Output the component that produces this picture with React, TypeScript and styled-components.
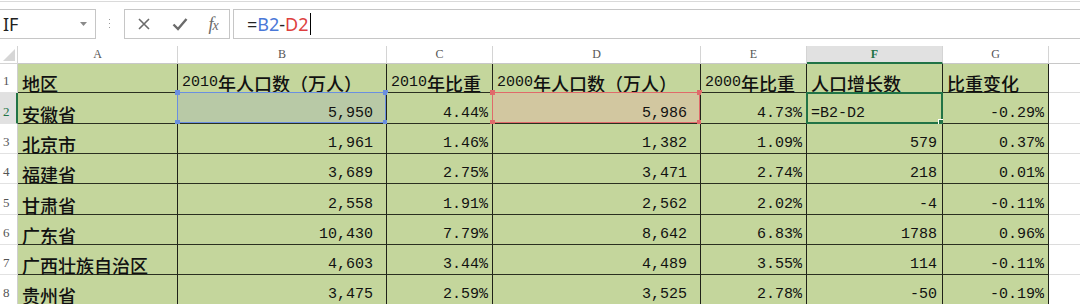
import * as React from 'react'
import styled, { createGlobalStyle, css } from 'styled-components'

const GlobalStyle = createGlobalStyle`
  html, body {
    margin: 0;
    padding: 0;
    background: #ffffff;
  }
  body {
    width: 1080px;
    height: 304px;
    overflow: hidden;
    font-family: "Noto Sans CJK SC", "Noto Sans", sans-serif;
  }
`

const colors = {
  green: '#c4d69c',
  greenBlue: '#b8c9a6',
  greenRed: '#d2c7a0',
  grid: '#1f2219',
  header: '#ffffff',
  headerLine: '#d4d4d4',
  headerActive: '#e1e1e1',
  excel: '#217346',
  blue: '#6a8fe0',
  red: '#e06a6a',
  ink: '#111111',
}

// ---------- formula bar ----------

const TopBar = styled.div`
  display: flex;
  margin-top: 1px;
  border-top: 1px solid #dadada;
  padding: 7px 0;
  height: 30px;
`

const NameBox = styled.div`
  width: 97px;
  margin-left: -1px;
  box-sizing: border-box;
  border: 1px solid #c6c6c6;
  display: flex;
  align-items: center;
  justify-content: space-between;
  padding: 0 8px 0 3px;
  font-family: "Noto Sans", sans-serif;
  font-size: 18px;
  color: #222;
`

const Grip = styled.div`
  width: 28px;
  display: flex;
  align-items: center;
  justify-content: center;
`

const FxBox = styled.div`
  width: 106px;
  box-sizing: border-box;
  border: 1px solid #c6c6c6;
  display: grid;
  grid-template-columns: 38px 34px 1fr;
  align-items: center;
  justify-items: center;
`

const Fx = styled.span`
  font-family: "Liberation Serif", serif;
  font-style: italic;
  font-size: 18px;
  color: #6a6a6a;
  letter-spacing: -1px;

  small {
    font-size: 14px;
  }
`

const FormulaInput = styled.div`
  flex: 1;
  margin-left: 3px;
  box-sizing: border-box;
  border: 1px solid #c6c6c6;
  border-right: none;
  display: flex;
  align-items: center;
  padding-left: 13px;
  font-family: "Noto Sans", sans-serif;
  font-size: 18px;
  color: #222;
`

const Ref = styled.span<{ $c: string }>`
  color: ${(p) => p.$c};
`

const Caret = styled.span`
  display: inline-block;
  width: 1px;
  height: 22px;
  background: #000;
  margin-left: 1px;
`

// ---------- sheet ----------

const Sheet = styled.div`
  display: grid;
  grid-template-columns: 18px 160px 209px 106px 208px 106px 136px 106px 106px;
  grid-template-rows: 18px 29px 31px 30px 30px 31px 30px 30px 30px;
`

const Corner = styled.div`
  background: ${colors.header};
  border-right: 1px solid ${colors.headerLine};
  border-bottom: 1px solid ${colors.headerLine};
  display: flex;
  align-items: flex-end;
  justify-content: flex-end;
  padding: 0 2px 2px 0;
`

const ColHead = styled.div<{ $active?: boolean }>`
  box-sizing: border-box;
  background: ${colors.header};
  border-right: 1px solid ${colors.headerLine};
  border-bottom: 1px solid #c8c8c8;
  display: flex;
  align-items: center;
  justify-content: center;
  font-family: "Liberation Serif", serif;
  font-size: 12px;
  color: #555;

  ${(p) =>
    p.$active &&
    css`
      background: ${colors.headerActive};
      border-bottom: 2px solid ${colors.excel};
      color: ${colors.excel};
      font-weight: bold;
    `}
`

const RowHead = styled.div<{ $active?: boolean }>`
  box-sizing: border-box;
  background: ${colors.header};
  border-right: 1px solid #cfcfcf;
  border-bottom: 1px solid #e2e2e2;
  display: flex;
  align-items: flex-end;
  padding: 0 0 3px 3px;
  font-family: "Liberation Serif", serif;
  font-size: 13px;
  color: #555;

  ${(p) =>
    p.$active &&
    css`
      background: ${colors.headerActive};
      border-right: 2px solid ${colors.excel};
      color: ${colors.excel};
    `}
`

type Sel = 'blue' | 'red' | 'active'

const Cell = styled.div<{ $right?: boolean; $pad?: number; $sel?: Sel; $empty?: boolean }>`
  position: relative;
  box-sizing: border-box;
  min-width: 0;
  background: ${(p) =>
    p.$empty ? '#ffffff' : p.$sel === 'blue' ? colors.greenBlue : p.$sel === 'red' ? colors.greenRed : colors.green};
  border-right: 1px solid ${(p) => (p.$empty ? '#dcdcdc' : colors.grid)};
  border-bottom: 1px solid ${(p) => (p.$empty ? '#dcdcdc' : '#2a3020')};
  display: flex;
  align-items: flex-end;
  justify-content: ${(p) => (p.$right ? 'flex-end' : 'flex-start')};
  padding: 0 ${(p) => p.$pad ?? 4}px 0 4px;
  font-size: 18px;
  line-height: 18px;
  font-weight: 500;
  color: ${colors.ink};
  white-space: nowrap;
`

// SimHei-like half-width digits
const Num = styled.span`
  font-family: "Liberation Mono", monospace;
  font-size: 15px;
  font-weight: 400;
  vertical-align: -1px;
`

const Frame = styled.div<{ $sel: Sel }>`
  position: absolute;
  pointer-events: none;
  ${(p) =>
    p.$sel === 'active'
      ? css`
          top: -1px;
          left: -1px;
          right: -1px;
          bottom: -1px;
          border: 2px solid ${colors.excel};
        `
      : css`
          top: -1px;
          left: -1px;
          right: 0;
          bottom: 0;
          border: 1px solid ${p.$sel === 'blue' ? colors.blue : colors.red};
        `}
`

const Handle = styled.span<{ $c: string; $x: 'l' | 'r'; $y: 't' | 'b' }>`
  position: absolute;
  width: 5px;
  height: 5px;
  background: ${(p) => p.$c};
  ${(p) => (p.$x === 'l' ? 'left: -3px;' : 'right: -3px;')}
  ${(p) => (p.$y === 't' ? 'top: -3px;' : 'bottom: -3px;')}
`

const FillHandle = styled.span`
  position: absolute;
  right: -4px;
  bottom: -4px;
  width: 5px;
  height: 5px;
  background: ${colors.excel};
  border: 1px solid #fff;
`

const Selection = ({ sel }: { sel: Sel }) => {
  if (sel === 'active') {
    return (
      <Frame $sel="active">
        <FillHandle />
      </Frame>
    )
  }
  const c = sel === 'blue' ? colors.blue : colors.red
  return (
    <Frame $sel={sel}>
      <Handle $c={c} $x="l" $y="t" />
      <Handle $c={c} $x="r" $y="t" />
      <Handle $c={c} $x="l" $y="b" />
      <Handle $c={c} $x="r" $y="b" />
    </Frame>
  )
}

// ---------- data ----------

const letters = ['A', 'B', 'C', 'D', 'E', 'F', 'G', 'H']

const headers: React.ReactNode[] = [
  '地区',
  <><Num>2010</Num>年人口数（万人）</>,
  <><Num>2010</Num>年比重</>,
  <><Num>2000</Num>年人口数（万人）</>,
  <><Num>2000</Num>年比重</>,
  '人口增长数',
  '比重变化',
]

const rows: string[][] = [
  ['安徽省', '5,950', '4.44%', '5,986', '4.73%', '=B2-D2', '-0.29%'],
  ['北京市', '1,961', '1.46%', '1,382', '1.09%', '579', '0.37%'],
  ['福建省', '3,689', '2.75%', '3,471', '2.74%', '218', '0.01%'],
  ['甘肃省', '2,558', '1.91%', '2,562', '2.02%', '-4', '-0.11%'],
  ['广东省', '10,430', '7.79%', '8,642', '6.83%', '1788', '0.96%'],
  ['广西壮族自治区', '4,603', '3.44%', '4,489', '3.55%', '114', '-0.11%'],
  ['贵州省', '3,475', '2.59%', '3,525', '2.78%', '-50', '-0.19%'],
]

// trailing space in the "#,##0 " number format for columns B and D
const rightPad = [4, 13, 4, 13, 4, 5, 4]

const selectionAt = (r: number, c: number): Sel | undefined => {
  if (r !== 0) return undefined
  if (c === 1) return 'blue'
  if (c === 3) return 'red'
  if (c === 5) return 'active'
  return undefined
}

export default function App() {
  return (
    <>
      <GlobalStyle />
      <TopBar>
        <NameBox>
          IF
          <svg width="7" height="4" viewBox="0 0 7 4">
            <path d="M0 0h7L3.5 4z" fill="#8a8a8a" />
          </svg>
        </NameBox>
        <Grip>
          <svg width="2" height="10" viewBox="0 0 2 10">
            <rect x="0" y="0" width="1" height="1" fill="#9a9a9a" />
            <rect x="0" y="4" width="1" height="1" fill="#9a9a9a" />
            <rect x="0" y="8" width="1" height="1" fill="#9a9a9a" />
          </svg>
        </Grip>
        <FxBox>
          <svg width="14" height="14" viewBox="0 0 14 14">
            <path d="M2 2l10 10M12 2L2 12" stroke="#6b6b6b" strokeWidth="1.6" fill="none" />
          </svg>
          <svg width="16" height="14" viewBox="0 0 16 14">
            <path d="M1.5 7.5l4.5 4.5L14.5 2" stroke="#6b6b6b" strokeWidth="2.4" fill="none" />
          </svg>
          <Fx>
            f<small>x</small>
          </Fx>
        </FxBox>
        <FormulaInput>
          =<Ref $c="#4a78d8">B2</Ref>-<Ref $c="#de3f3f">D2</Ref>
          <Caret />
        </FormulaInput>
      </TopBar>

      <Sheet>
        <Corner>
          <svg width="12" height="12" viewBox="0 0 12 12">
            <path d="M12 0V12H0z" fill="#d6d6d6" />
          </svg>
        </Corner>
        {letters.map((l) => (
          <ColHead key={l} $active={l === 'F'}>
            {l}
          </ColHead>
        ))}

        <RowHead>1</RowHead>
        {headers.map((h, i) => (
          <Cell key={i}>{h}</Cell>
        ))}
        <Cell $empty />

        {rows.map((row, r) => (
          <React.Fragment key={r}>
            <RowHead $active={r === 0}>{r + 2}</RowHead>
            {row.map((v, c) => {
              const sel = selectionAt(r, c)
              const isText = c === 0 || v.startsWith('=')
              return (
                <Cell key={c} $right={!isText} $pad={rightPad[c]} $sel={sel}>
                  {c === 0 ? v : <Num>{v}</Num>}
                  {sel && <Selection sel={sel} />}
                </Cell>
              )
            })}
            <Cell $empty />
          </React.Fragment>
        ))}
      </Sheet>
    </>
  )
}
